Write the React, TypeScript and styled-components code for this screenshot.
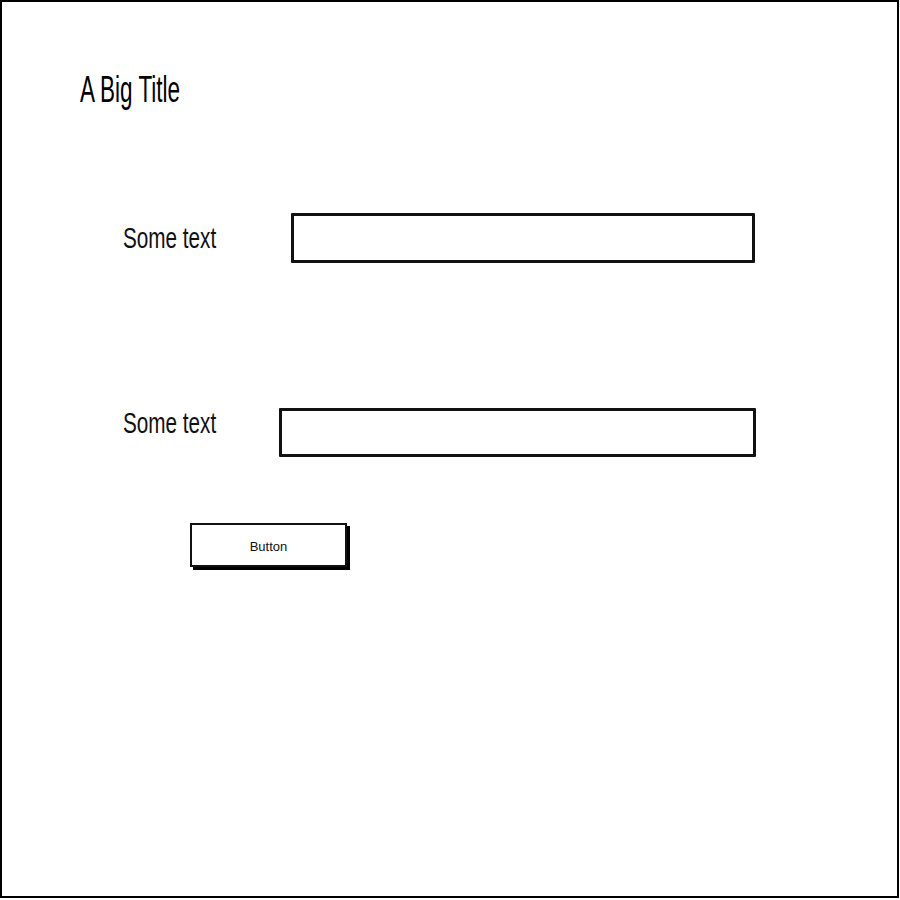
import React from 'react';
import styled, {createGlobalStyle} from 'styled-components';

const GlobalStyle = createGlobalStyle`
  html, body {
    margin: 0;
    padding: 0;
    background: #fff;
  }
  body {
    font-family: "Liberation Sans", Arial, sans-serif;
    color: #000;
  }
`;

const Frame = styled.div`
  box-sizing: border-box;
  width: 899px;
  height: 898px;
  border: 2px solid #000;
  padding: 70px 0 0 78px;
  display: flex;
  flex-direction: column;
`;

const Title = styled.h1`
  margin: 0;
  font-size: 36px;
  line-height: 36px;
  font-weight: 400;
  display: inline-block;
  transform: scaleX(0.625);
  transform-origin: left center;
  white-space: nowrap;
`;

const Form = styled.div`
  margin-top: 105px;
  padding-left: 43px;
  display: flex;
  flex-direction: column;
`;

const Row = styled.div<{$gap: number}>`
  display: flex;
  align-items: flex-start;
  margin-bottom: ${p => p.$gap}px;
`;

const Label = styled.span<{$indent: number; $offset: number}>`
  flex: 0 0 ${p => p.$indent}px;
  margin-top: ${p => p.$offset}px;
  font-size: 30px;
  line-height: 30px;
  color: #111;
  transform: scaleX(0.69);
  transform-origin: left center;
  white-space: nowrap;
`;

const Field = styled.input<{$width: number; $height: number}>`
  box-sizing: border-box;
  width: ${p => p.$width}px;
  height: ${p => p.$height}px;
  border: 3px solid #111;
  border-radius: 1px;
  background: #fff;
  margin: 0;
  padding: 0 8px;
  outline: none;
`;

const Button = styled.button`
  box-sizing: border-box;
  align-self: flex-start;
  margin-left: 67px;
  width: 157px;
  height: 44px;
  border: 2px solid #111;
  background: #fff;
  box-shadow: 3px 3px 0 #000;
  font-family: "Liberation Sans", Arial, sans-serif;
  font-size: 13px;
  color: #111;
  cursor: pointer;
  padding: 2px 0 0;
`;

export default function App() {
  return (
    <>
      <GlobalStyle />
      <Frame>
        <Title>A Big Title</Title>
        <Form>
          <Row $gap={145}>
            <Label $indent={168} $offset={10}>Some text</Label>
            <Field $width={464} $height={50} />
          </Row>
          <Row $gap={66}>
            <Label $indent={156} $offset={0}>Some text</Label>
            <Field $width={477} $height={49} />
          </Row>
          <Button>Button</Button>
        </Form>
      </Frame>
    </>
  );
}
